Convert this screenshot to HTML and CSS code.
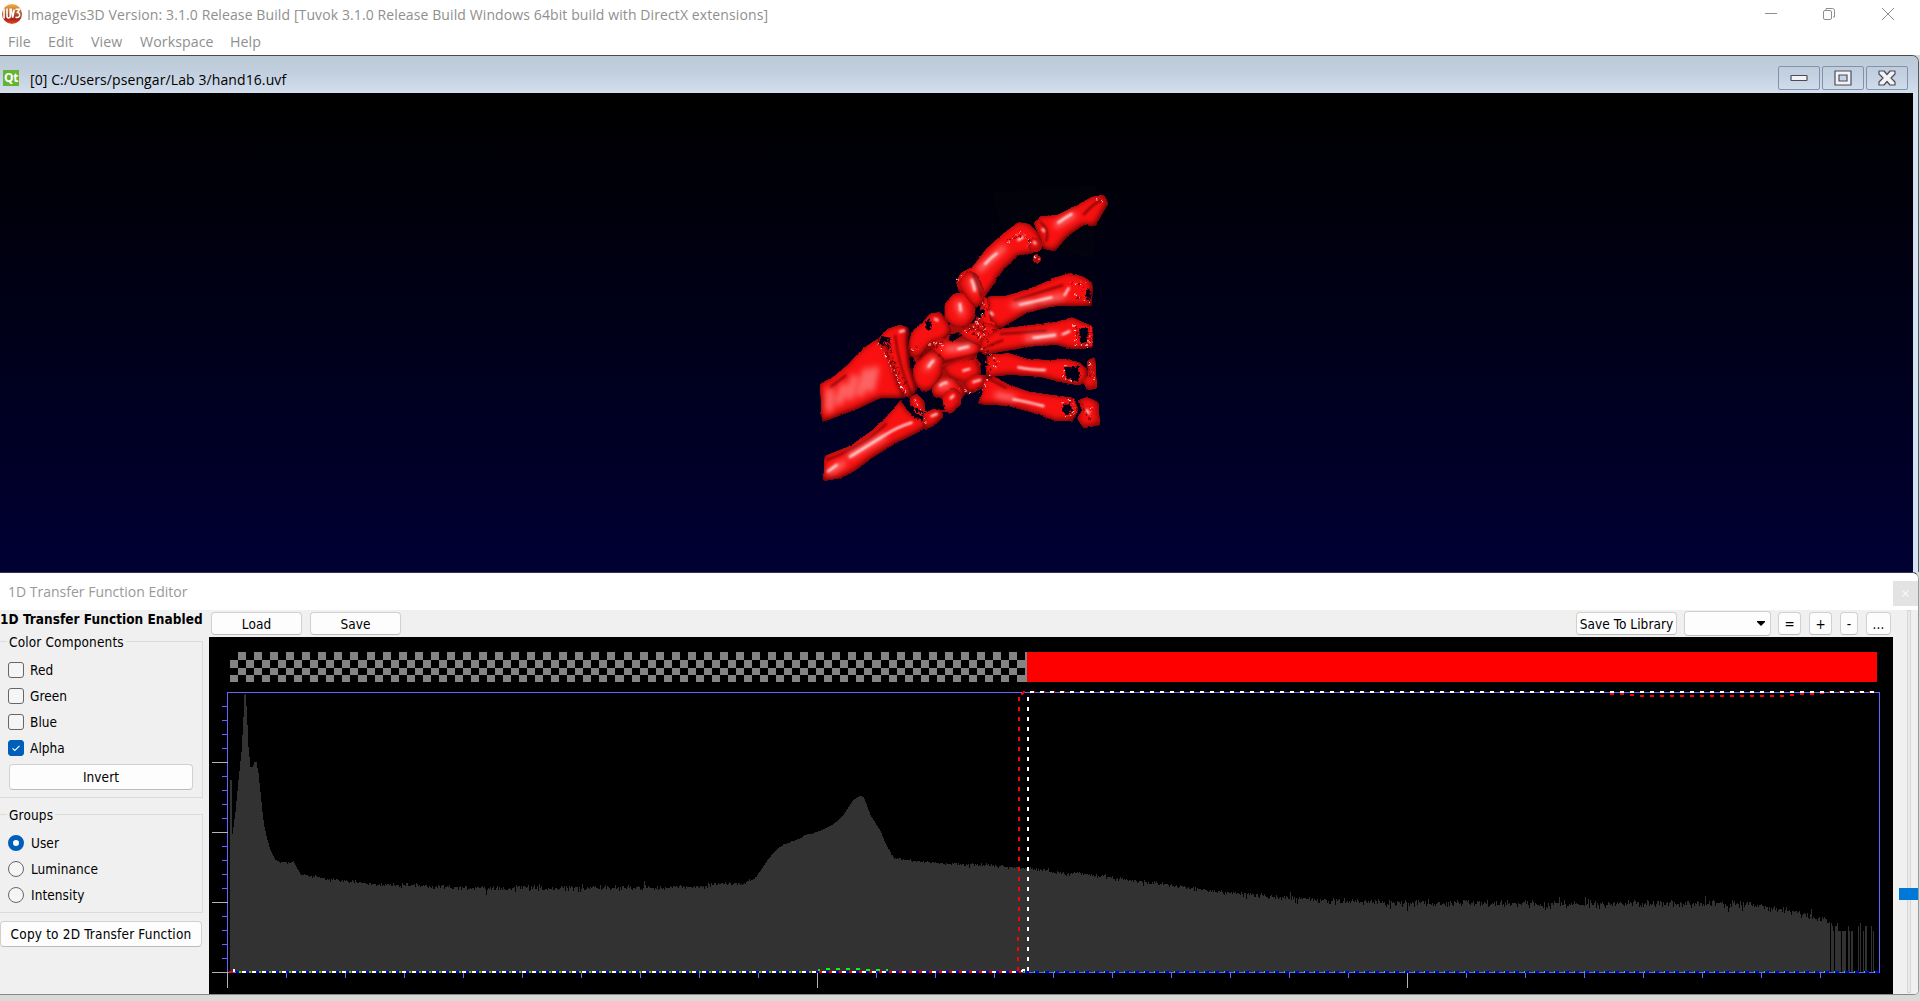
FILE: index.html
```html
<!DOCTYPE html>
<html lang="en">
<head>
<meta charset="utf-8">
<title>ImageVis3D</title>
<link rel="stylesheet" href="styles.css">
</head>
<body>
<header class="titlebar">
  <svg class="app-icon" width="20" height="22" viewBox="0 0 20 22">
    <defs><linearGradient id="orb" x1="0" y1="0" x2="0" y2="1"><stop offset="0" stop-color="#f6b23c"/><stop offset=".5" stop-color="#a8502a"/><stop offset=".75" stop-color="#a92218"/><stop offset="1" stop-color="#e8501c"/></linearGradient></defs>
    <circle cx="10" cy="11" r="10" fill="url(#orb)"/>
    <path d="M2 5.500v10M5 5.500v7.500q0 2 1.600 2t1.600-2V5.500M9 5.500l1.700 9 1.500-8M13.500 6.300h4l-2 3.200q2.700.5 2 3.500-.8 2-4 1.300" fill="none" stroke="#fff" stroke-width="1.600"/>
  </svg>
  <span class="title">ImageVis3D Version: 3.1.0 Release Build [Tuvok 3.1.0 Release Build Windows 64bit build with DirectX extensions]</span>
  <svg class="win-controls" width="130" height="14" viewBox="0 0 130 14" fill="none" stroke="#8f8f8f">
    <path d="M0 6.500h12"/>
    <rect x="58.500" y="3.500" width="8" height="9" rx="1.500"/><path d="M61 3V1.500h6.500q2 0 2 2V10H68"/>
    <path d="M117 1l12 12M129 1l-12 12"/>
  </svg>
</header>
<nav class="menubar"><span class="m1">File</span><span class="m2">Edit</span><span class="m3">View</span><span class="m4">Workspace</span><span class="m5">Help</span></nav>

<section class="subwindow">
  <div class="subhead">
    <span class="qt">Qt</span>
    <span class="path">[0] C:/Users/psengar/Lab 3/hand16.uvf</span>
    <div class="subbtns">
      <span class="sb"><svg width="18" height="8" viewBox="0 0 18 8"><rect x="1" y="1.500" width="16" height="5" rx=".5" fill="#f3f3f3" stroke="#4b4b60" stroke-width="1.200"/></svg></span>
      <span class="sb"><svg width="18" height="16" viewBox="0 0 18 16"><path d="M1 1h16v14H1zM5 5v6h8V5z" fill="#f3f3f3" fill-rule="evenodd" stroke="#4b4b60" stroke-width="1.200"/></svg></span>
      <span class="sb"><svg width="18" height="16" viewBox="0 0 18 16"><path d="M1 1h5l3 3.500L12 1h5v3l-4 4 4 4v3h-5l-3-3.500L6 15H1v-3l4-4-4-4z" fill="#f3f3f3" stroke="#4b4b60" stroke-width="1.200" stroke-linejoin="round"/></svg></span>
    </div>
  </div>
  <div class="view">
    <svg class="hand" width="320" height="320" viewBox="0 0 960 960">
      <defs>
        <filter id="bone" x="-10%" y="-10%" width="120%" height="120%" color-interpolation-filters="sRGB">
          <feGaussianBlur in="SourceAlpha" stdDeviation="2.500" result="soft"/>
          <feComponentTransfer in="soft" result="mask"><feFuncR type="linear" slope="0" intercept=".98"/><feFuncG type="linear" slope="0" intercept=".07"/><feFuncB type="linear" slope="0" intercept=".07"/><feFuncA type="linear" slope="9" intercept="-3.600"/></feComponentTransfer>
          <feTurbulence type="fractalNoise" baseFrequency=".09" numOctaves="2" seed="4" result="n"/>
          <feDisplacementMap in="mask" in2="n" scale="7" xChannelSelector="R" yChannelSelector="G" result="s"/>
          <feColorMatrix in="s" values="0 0 0 0 .2  0 0 0 0 0  0 0 0 0 0  0 0 0 -1 1" result="inv"/>
          <feGaussianBlur in="inv" stdDeviation="9"/>
          <feOffset dx="-2" dy="-4"/>
          <feComposite in2="s" operator="in" result="edge"/>
          <feMerge><feMergeNode in="s"/><feMergeNode in="edge"/></feMerge>
        </filter>
        <filter id="b2" x="-30%" y="-30%" width="160%" height="160%"><feGaussianBlur stdDeviation="3"/></filter>
        <filter id="b3" x="-30%" y="-30%" width="160%" height="160%"><feGaussianBlur stdDeviation="3.500"/></filter>
        <filter id="b8" x="-30%" y="-30%" width="160%" height="160%"><feGaussianBlur stdDeviation="9"/></filter>
        <filter id="rough" x="-5%" y="-5%" width="110%" height="110%"><feTurbulence type="fractalNoise" baseFrequency=".13" numOctaves="2" seed="9"/><feDisplacementMap in="SourceGraphic" scale="16" xChannelSelector="R" yChannelSelector="G"/></filter>
      </defs>
      <path d="M575 40L890 15 880 240 600 130z" fill="#0b0b0c" opacity=".2" filter="url(#b8)"/>
      <!-- shadowed tissue behind the carpals -->
      <path fill="#a80808" filter="url(#rough)" d="M330 500L400 470 445 435 520 430 560 360 585 370 590 520 545 520 540 590 500 640 440 610 400 600 345 545z"/>
      <g fill="#fa1212">
        <!-- forearm -->
        <path filter="url(#bone)" d="M60 612L100 590 140 557 190 505 235 475 262 500 282 560 300 625 320 655 240 655 170 688 66 727z"/>
        <path filter="url(#bone)" d="M230 482L262 447 300 434 326 443 324 500 330 560 352 625 332 654 303 644 285 580 258 525 270 500z"/>
        <path filter="url(#bone)" d="M74 828L150 798 215 752 265 705 302 660 320 690 345 710 388 722 368 750 290 788 215 834 165 873 120 895 70 903z"/>
        <path filter="url(#bone)" d="M328 655L350 640 374 665 376 700 400 686 428 688 430 712 402 738 368 750 375 715 333 685z"/>
        <!-- carpals -->
        <path filter="url(#bone)" d="M324 502L335 455 368 425 392 400 422 397 442 425 456 455 430 480 395 490 362 530 332 532z"/>
        <path filter="url(#bone)" d="M434 372L460 341 504 338 524 370 526 412 502 444 463 442 434 417z"/>
        <path filter="url(#bone)" d="M380 495L420 474 480 486 538 484 543 517 512 545 430 550 402 517z"/>
        <path filter="url(#bone)" d="M338 565L362 528 400 511 432 535 428 582 403 624 370 638 340 608z"/>
        <path filter="url(#bone)" d="M426 562L478 541 532 541 545 582 500 609 452 594z"/>
        <path filter="url(#bone)" d="M394 627L428 588 467 596 499 640 477 664 435 654 402 652z"/>
        <path filter="url(#bone)" d="M428 645L460 621 484 640 482 674 456 699 427 694z"/>
        <path filter="url(#bone)" d="M490 607L528 581 565 588 549 624 510 642z"/>
        <path filter="url(#bone)" d="M545 350L592 352 616 400 598 443 560 462 538 425z"/>
        <path filter="url(#bone)" d="M475 462L505 434 550 425 598 440 590 480 545 500 500 482z"/>
        <!-- thumb -->
        <path filter="url(#bone)" d="M468 305L483 278 518 260 558 207 608 162 655 127 688 132 716 160 726 190 702 219 655 226 607 274 577 319 552 354 520 340 478 338z"/>
        <path filter="url(#bone)" d="M472 310L505 271 533 283 555 335 549 374 525 384 500 354z"/>
        <path filter="url(#bone)" d="M700 130L722 108 770 106 830 76 875 51 912 44 926 70 905 104 887 139 852 134 802 169 767 212 733 209 720 170z"/>
        <circle filter="url(#bone)" cx="706" cy="195" r="22"/>
        <path filter="url(#bone)" d="M698 232l12-14 15 19-10 14-14-4z"/>
        <!-- metacarpals -->
        <path filter="url(#bone)" d="M560 350L620 347 700 322 765 293 810 279 852 291 878 310 876 378 825 379 760 378 680 399 600 446 570 420z"/>
        <path filter="url(#bone)" d="M540 480L600 446 690 436 765 427 817 412 852 428 877 437 878 503 820 508 770 494 700 499 610 514 548 526z"/>
        <path filter="url(#bone)" d="M560 525L627 520 680 536 750 541 800 536 840 548 864 570 860 606 835 616 785 607 720 590 630 584 558 592z"/>
        <path filter="url(#bone)" d="M860 543L885 530 891 626 863 630 846 602 866 585z"/>
        <path filter="url(#bone)" d="M548 602L580 588 627 614 690 636 780 648 822 654 836 690 819 722 770 724 690 695 620 677 532 672 548 640z"/>
        <path filter="url(#bone)" d="M832 662L860 651 895 666 900 736 850 744 831 715 847 690z"/>
      </g>
      <!-- soft dark grooves between bones -->
      <g fill="none" stroke="#500000" stroke-width="6" filter="url(#b3)" opacity=".75">
        <path d="M285 465Q296 560 335 645M355 540Q390 500 430 485M430 545L540 520M545 350Q535 320 520 280M325 445Q315 530 350 630M500 440L560 455M560 500L610 480M80 840Q190 800 260 730M90 622L140 585M738 185Q752 150 720 125M850 105Q880 70 905 60M640 362L790 315M600 462L740 452M565 595L620 625"/>
      </g>
      <!-- holes -->
      <g fill="#000015" filter="url(#rough)">
        <path d="M245 468l25 5 5 28-22-8-18 3zM312 665l30 18 32 15-4 22-30-8-14-24zM376 425l14-10 4 30-12 8zM448 465l22-8 18 8-20 14-20 6zM535 520l20 5 14 30-18 2-22-20zM380 650l48 10 5 30-54-8zM795 560l20 2 22-4 2 38-14 10-28-14zM838 445l26-4-2 45-22 6zM790 672l20-2 8 22-18 12-14-10zM862 320l10 15-4 28-12-15zM548 380l8 14-16 24-6-16z"/>
      </g>
      <!-- broad sheen -->
      <g fill="none" stroke="#ffb0b0" stroke-linecap="round" filter="url(#b8)">
        <path stroke-width="22" opacity=".6" d="M88 685L90 635M118 665L130 620M150 650L162 595M182 640L198 575M212 625L225 570"/>
        <path stroke-width="14" opacity=".75" d="M540 268L610 205M770 135L820 105M720 362L790 348M640 376L700 368M680 475L770 465M590 645L640 655M475 370L485 400M380 565L400 540M420 620L445 612M90 875L130 850M150 828L250 770M515 300L525 330M440 508L510 500"/>
      </g>
      <!-- highlights -->
      <g fill="none" stroke="#fff" stroke-linecap="round" filter="url(#b2)">
        <path stroke-width="7" opacity=".85" d="M150 830Q215 790 255 765T335 728M555 252Q570 235 590 220M515 300Q522 315 524 332M775 128Q800 110 815 102M660 374Q700 365 755 352M700 473Q722 472 765 465M655 562Q700 570 735 570M640 658Q680 665 730 678M480 372L482 392M386 560Q392 550 400 542M420 616Q430 608 440 608M475 507L505 500M490 572L508 567M452 655L460 647M405 417L412 421M572 397L578 404M655 180L668 172M702 186L706 190M728 148L732 153M84 874L110 855M794 345L806 325M788 463L808 454M520 606L540 600M860 690L866 700M300 455L312 452M395 708L410 702"/>
      </g>
      <!-- porous, speckled ends -->
      <g fill="none" filter="url(#rough)">
        <g stroke="#780000" stroke-width="4.500" stroke-dasharray="7 10"><path d="M245 500L280 550 300 630 322 645M265 480L280 540 320 620M395 490L425 510 415 530M335 515L360 490M500 455L555 430 545 480 515 450M490 440L530 470 590 450M550 500L590 550 560 580M815 305L850 320 840 360 820 340M625 180L670 165 695 190M830 440L832 490M560 480L580 500M570 370L550 410M500 640L540 620M865 550L875 600M845 670L870 720"/></g>
        <g stroke="#ffc4c4" stroke-width="4" stroke-dasharray="4 11"><path d="M235 490L265 540 295 600 318 640M280 565L308 630M388 492L428 490 420 518M338 510L362 508M495 458L530 430 555 450 545 475 520 440M550 370L545 400 530 430M545 505L595 545 585 565 565 545M570 585L540 640M810 310L860 310M825 345L872 370M822 435L828 495 865 495 874 450M795 555L790 595 830 605M785 670L800 655 825 675 820 705 790 710M625 185L660 155 690 185 680 205M345 660L365 700 380 735M472 300L488 285M705 228L718 240M868 550L885 600M875 680L870 720M890 58L918 70M480 625L510 640"/></g>
        <g stroke="#fa1212" stroke-width="5"><path d="M250 485L285 500M342 690L372 712M838 440L872 442 874 498M820 660L828 700M555 540L575 560"/></g>
      </g>
    </svg>
  </div>
</section>

<section class="editor">
  <div class="edhead"><span class="edtitle">1D Transfer Function Editor</span><span class="edclose"><svg width="7" height="7" viewBox="0 0 7 7"><path d="M.5.5l6 6M6.500.5l-6 6" stroke="#f6f6f6" stroke-width="1.200"/></svg></span></div>
  <div class="edbody">
    <aside class="side">
      <div class="enabled">1D Transfer Function Enabled</div>
      <fieldset class="group colors">
        <legend>Color Components</legend>
        <div class="opt"><i class="cb"></i>Red</div>
        <div class="opt"><i class="cb"></i>Green</div>
        <div class="opt"><i class="cb"></i>Blue</div>
        <div class="opt"><i class="cb on"><svg width="16" height="16" viewBox="0 0 16 16"><path d="M4 8.300l2.700 2.500L12 5.600" fill="none" stroke="#fff" stroke-width="1.200"/></svg></i>Alpha</div>
        <div class="btn invert">Invert</div>
      </fieldset>
      <fieldset class="group groups">
        <legend>Groups</legend>
        <div class="opt r"><i class="rb on"></i>User</div>
        <div class="opt r"><i class="rb"></i>Luminance</div>
        <div class="opt r"><i class="rb"></i>Intensity</div>
      </fieldset>
      <div class="btn copy">Copy to 2D Transfer Function</div>
    </aside>
    <main class="main">
      <div class="tools">
        <span class="btn load">Load</span><span class="btn save">Save</span>
        <span class="btn lib">Save To Library</span><span class="btn combo"><svg width="8" height="5" viewBox="0 0 8 5"><path d="M0 0h8v1L4 5 0 1z"/></svg></span><span class="btn eq">=</span><span class="btn plus">+</span><span class="btn minus">-</span><span class="btn dots">...</span>
      </div>
      <svg id="plot" class="plot" width="1684" height="357" viewBox="209 637 1684 357" shape-rendering="crispEdges"></svg>
    </main>
    <div class="slider"><span class="groove"></span><span class="thumb"></span></div>
  </div>
</section>
<script src="plot.js"></script>
</body>
</html>
```
FILE: styles.css
```css
* { box-sizing: border-box; }
body { margin: 0; width: 1920px; height: 1001px; overflow: hidden; background: #d9d9d9; display: flex; flex-direction: column; font-family: "DejaVu Sans Condensed", "DejaVu Sans", sans-serif; font-stretch: condensed; font-size: 13.5px; letter-spacing: .07px; color: #000; white-space: nowrap; }
.titlebar { height: 28px; background: #fff; display: flex; align-items: center; padding-left: 2px; font-family: "Open Sans", sans-serif; font-stretch: normal; }
.title { margin-left: 5px; color: #8f8f8f; font-size: 14px; letter-spacing: .105px; }
.win-controls { margin-left: auto; margin-right: 25px; }
.menubar { height: 27px; background: #fff; display: flex; align-items: center; padding-left: 8px; font-family: "Open Sans", sans-serif; font-stretch: normal; font-size: 14.2px; color: #8f8f8f; }
.m1 { width: 40px; } .m2 { width: 43px; } .m3 { width: 49px; } .m4 { width: 90px; }
.subwindow { flex: none; height: 517px; width: 1919px; border-top: 1px solid #4a4a4e; border-right: 1px solid #55585e; border-top-right-radius: 7px; background: #d6e2f1; overflow: hidden; }
.subhead { height: 37px; display: flex; align-items: center; padding: 9px 10px 2px 3px; background: linear-gradient(#bccad8, #c3d0df 50%, #d3dfed); }
.qt { width: 16px; height: 16px; background: #65b32e; color: #fff; font: bold 12px/16px "Open Sans", sans-serif; text-align: center; letter-spacing: -.5px; }
.path { margin-left: 11px; margin-top: 2px; font: 14px "Open Sans", sans-serif; letter-spacing: .1px; }
.subbtns { margin-left: auto; display: flex; gap: 2px; }
.sb { width: 42px; height: 24px; border: 1px solid #8291ac; border-radius: 2px; display: flex; align-items: center; justify-content: center; }
.view { width: 1913px; height: 480px; background: linear-gradient(#000, #000033); padding: 87px 0 0 800px; }
.hand { display: block; }
.editor { flex: none; height: 423px; width: 1919px; background: #fff; border-top: 1px solid #333347; border-right: 1px solid #999; border-bottom: 1px solid #888; border-radius: 0 7px 5px 0; overflow: hidden; }
.edhead { height: 37px; display: flex; justify-content: space-between; align-items: center; padding-left: 8px; background: #fff; }
.edtitle { font: 14px "Open Sans", sans-serif; letter-spacing: 0; color: #999; }
.edclose { width: 25px; height: 25px; margin-top: 4px; background: #e3e3e3; display: flex; align-items: center; justify-content: center; }
.edbody { height: 384px; display: flex; background: #f0f0f0; }
.side { width: 209px; }
.enabled { height: 20px; line-height: 18px; font-weight: bold; letter-spacing: .04px; }
.group { margin: 0; padding: 0; border: 1px solid #dcdcdc; border-left: 0; width: 203px; }
.group legend { margin-left: 7px; padding: 0 2px; height: 22px; line-height: 24px; letter-spacing: .15px; }
.colors { height: 168px; }
.opt { height: 26px; display: flex; align-items: center; padding-left: 8px; gap: 6px; }
.r { gap: 7px; }
.cb, .rb { width: 16px; height: 16px; border: 1px solid #666; border-radius: 3px; background: #f5f5f5; display: flex; align-items: center; justify-content: center; }
.cb.on { background: #005fb8; border-color: #005fb8; }
.rb { border-radius: 50%; }
.rb.on { border: 5px solid #005fb8; background: #fff; }
.btn { display: flex; align-items: center; justify-content: center; background: #fdfdfd; border: 1px solid #d0d0d0; border-bottom-color: #bcbcbc; border-radius: 4px; }
.colors .opt:nth-of-type(1) { margin-top: 5px; }
.invert { width: 184px; height: 26px; margin: 3px 0 0 9px; }
.groups { height: 110px; margin-top: 5px; }
.groups .opt:nth-of-type(1) { margin-top: 5px; }
.copy { width: 202px; height: 26px; margin-top: 8px; letter-spacing: .18px; }
.main { width: 1684px; }
.tools { height: 27px; display: flex; align-items: center; padding-left: 2px; }
.tools .btn { height: 23px; }
.load { width: 91px; } .save { width: 91px; margin-left: 8px; }
.lib { width: 101px; margin-left: 1175px; }
.tools .combo { width: 87px; height: 25px; margin-left: 7px; justify-content: flex-end; padding-right: 5px; }
.eq { width: 23px; margin-left: 7px; } .plus { width: 23px; margin-left: 8px; } .minus { width: 18px; margin-left: 8px; } .dots { width: 25px; margin-left: 8px; }
.plot { display: block; background: #000; }
.slider { width: 25px; display: grid; justify-items: center; }
.groove { grid-area: 1 / 1; width: 4px; height: 383px; background: #e7eaea; border: 1px solid #d6d6d6; margin-left: 6px; }
.thumb { grid-area: 1 / 1; width: 19px; height: 12px; margin: 278px 0 0 6px; background: #0078d7; }
```
FILE: plot.js
```js
const out = [];
const rect = (x, y, w, h, c) => out.push(`<rect x="${x}" y="${y}" width="${w}" height="${h}" fill="${c}"/>`);

// opacity checkerboard and opaque colour strip
const rows = [652, 660, 668, 675, 682];
for (let r = 0; r < 4; r++)
  for (let n = (r + 1) % 2; n < 100; n += 2) {
    const x = Math.round(230 + 8.031 * n);
    const e = Math.min(1027, Math.round(230 + 8.031 * (n + 1)));
    if (e > x) rect(x, rows[r], e - x, rows[r + 1] - rows[r], '#848484');
  }
rect(1025, 652, 2, 30, '#848484');
rect(1027, 652, 850, 30, '#ff0000');

// histogram envelope: x, y, jitter
const env = [[232,834,0],[235,812,0],[238,780,0],[241,752,0],[243,717,0],[244,695,0],[245,694,0],[246,706,0],[247,725,0],[248,747,0],[250,767,0],[252,767,0],[254,762,0],[256,762,0],[258,773,0],[260,792,0],[262,812,0],[264,827,0],[267,840,0],[270,850,0],[275,860,0],[280,862,1],[286,862,1],[290,864,1],[293,861,1],[296,867,1],[300,874,1],[315,877,1.5],[345,881,1.5],[380,885,2.5],[420,886,2],[450,887,2],[480,889,3],[540,888,2],[560,889,3],[600,888,2.500],[660,888,2.500],[700,886,2],[720,884,2],[740,883,2],[750,881,1],[753,880,1],[758,873,.5],[763,866,.5],[768,859,.5],[772,854,0],[778,848,.5],[782,845,.5],[790,842,.5],[800,838,.5],[805,835,.5],[820,831,.5],[830,826,0],[838,820,0],[843,815,0],[848,807,0],[852,801,0],[857,797,0],[860,796,0],[863,797,0],[866,804,0],[870,815,0],[875,823,0],[880,831,0],[885,843,1],[890,853,1],[894,858,1],[912,861,1],[950,864,1.500],[1000,866,1.500],[1020,868,1.500],[1040,870,1.500],[1060,873,2],[1080,873,2],[1125,880,2],[1160,884,2],[1190,888,2],[1220,892,2],[1250,895,2.500],[1290,899,3],[1340,901,3],[1390,903,3.500],[1600,904,3.500],[1680,903,3.500],[1745,904,3.500],[1780,910,4],[1800,913,4],[1820,920,4],[1830,924,4]];
let seed = 77;
const rnd = () => (seed = (seed * 16807) % 2147483647) / 2147483647;
rect(230, 780, 2, 192, '#323232');
let d = 'M232 972', k = 0;
for (let x = 232; x < 1830; x++) {
  while (k < env.length - 2 && env[k + 1][0] <= x) k++;
  const [x0, y0, j] = env[k], [x1, y1] = env[k + 1];
  const spike = rnd() > .95 ? 2 : 1;
  const y = Math.round(y0 + (y1 - y0) * (x - x0) / (x1 - x0) + (rnd() + rnd() - 1) * j * 1.4 * spike);
  d += `V${y}H${x + 1}`;
}
out.push(`<path d="${d}V972z" fill="#323232"/>`);
[[1831,1,923],[1832,1,926],[1833,1,931],[1835,2,926],[1837,1,923],[1838,3,931],[1842,4,931],[1848,1,926],[1849,1,931],[1851,2,931],[1858,1,926],[1860,1,923],[1863,1,931],[1865,2,926],[1871,1,926],[1873,1,931]].forEach(([x, w, y]) => rect(x, y, w, 972 - y, '#323232'));

// axes and frame
const ax = '#6464ff', gr = '#b4b4b4';
rect(227, 692, 1653, 1, ax); rect(227, 972, 1653, 1, ax);
rect(227, 692, 1, 281, ax); rect(1879, 692, 1, 281, ax);
for (let i = 1; i <= 20; i++) i % 5 ? rect(222, 692 + 14 * i, 5, 1, ax) : rect(212, 692 + 14 * i, 16, 1, gr);
for (let i = 0; i < 28; i++) i % 10 ? rect(227 + 59 * i, 973, 1, 5, ax) : rect(227 + 59 * i, 973, 1, 15, gr);

// channel curves
for (let x = 232; x < 1022; x += 10) {
  if (x > 232) rect(x, 971, 4, 2, '#fff');
  rect(x + 4, 971, 3, 2, '#0000ff');
  rect(x + 7, 971, x < 812 ? 2 : 3, 2, x < 812 ? '#00ff00' : '#ff0000');
  if (x < 812) rect(x + 9, 971, 1, 2, '#ff0000');
}
rect(229, 971, 4, 2, '#ff0000'); rect(233, 969, 2, 3, '#fff');
for (let x = 1024; x < 1876; x += 10) { rect(x, 971, 1, 2, '#00ff00'); rect(x + 1, 971, 4, 2, '#0000ff'); }
rect(818, 969, 2, 2, '#00ff00');
[826, 836, 846, 856].forEach(x => rect(x, 968, 4, 2, '#00ff00'));
[866, 876, 886].forEach(x => rect(x, 969, x === 886 ? 2 : 4, 2, '#00ff00'));
for (let y = 697; y < 970; y += 10) { rect(y > 935 ? 1017 : 1018, y, 2, 4, '#ff0000'); rect(1027, y, 2, 4, '#fff'); }
rect(1021, 693, 2, 2, '#ff0000'); rect(1022, 692, 2, 2, '#ff0000'); rect(1023, 691, 2, 2, '#ff0000');
rect(1021, 970, 2, 2, '#fff'); rect(1022, 969, 3, 2, '#fff');
for (let x = 1030; x < 1875; x += 10) {
  if (x < 1070 || x > 1820) rect(x - (x > 1820 ? 1 : 0), 691, 5, 2, '#ff0000');
  if (x >= 1610 && x <= 1820) {
    const y = x < 1640 ? 692 + (x - 1600) / 15 : x > 1780 ? 695 - (x - 1780) / 12 : 695;
    rect(x, Math.round(y), 4, 2, '#ff0000');
  }
  rect(x, 691, 4, 2, '#fff');
}
document.getElementById('plot').innerHTML = out.join('');
```
